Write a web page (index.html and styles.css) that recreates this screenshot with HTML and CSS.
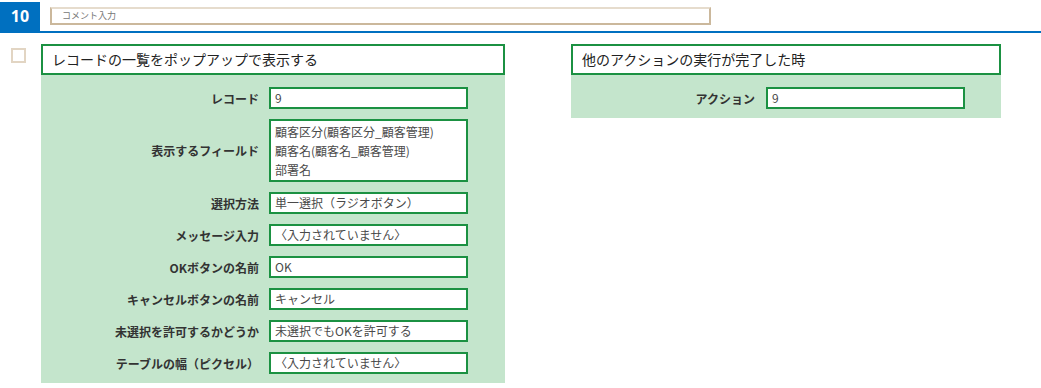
FILE: index.html
```html
<!DOCTYPE html>
<html lang="ja">

<head>
    <meta charset="UTF-8">
    <title>アクション設定</title>
    <link rel="stylesheet" href="styles.css">
</head>

<body>
    <header class="step-header">
        <div class="step-no">10</div>
        <div class="comment-box">コメント入力</div>
    </header>

    <main class="step-body">
        <span class="check"></span>

        <section class="panel panel-main">
            <h2 class="panel-title">レコードの一覧をポップアップで表示する</h2>
            <div class="panel-rows">
                <label>レコード</label>
                <div class="field">9</div>

                <label>表示するフィールド</label>
                <div class="field multi">顧客区分(顧客区分_顧客管理)<br>顧客名(顧客名_顧客管理)<br>部署名</div>

                <label>選択方法</label>
                <div class="field">単一選択（ラジオボタン）</div>

                <label>メッセージ入力</label>
                <div class="field">〈入力されていません〉</div>

                <label>OKボタンの名前</label>
                <div class="field">OK</div>

                <label>キャンセルボタンの名前</label>
                <div class="field">キャンセル</div>

                <label>未選択を許可するかどうか</label>
                <div class="field">未選択でもOKを許可する</div>

                <label>テーブルの幅（ピクセル）</label>
                <div class="field">〈入力されていません〉</div>
            </div>
        </section>

        <section class="panel panel-side">
            <h2 class="panel-title">他のアクションの実行が完了した時</h2>
            <div class="panel-rows">
                <label>アクション</label>
                <div class="field">9</div>
            </div>
        </section>
    </main>
</body>

</html>
```

FILE: styles.css
```css
:root {
    --blue: #0070c0;
    --green: #1b9142;
    --green-bg: #c4e5cc;
    --tan: #cbb89c;
    --text: #333;
}

* {
    margin: 0;
    padding: 0;
    box-sizing: border-box;
}

body {
    font-family: "Noto Sans CJK JP", "Noto Sans", sans-serif;
    color: var(--text);
    background: #fff;
}

.step-header {
    display: flex;
    align-items: center;
    height: 33px;
    padding-top: 2px;
    border-bottom: 2px solid var(--blue);
}

.step-no {
    width: 40px;
    height: 29px;
    background: var(--blue);
    color: #fff;
    font-family: "Open Sans", "Noto Sans", sans-serif;
    font-weight: 700;
    font-size: 16px;
    line-height: 29px;
    text-align: center;
}

.comment-box {
    margin-left: 10px;
    margin-bottom: 2px;
    width: 661px;
    height: 18px;
    border: 2px solid var(--tan);
    border-top-color: #e6dccd;
    padding-left: 10px;
    font-size: 9px;
    line-height: 14px;
    color: #777;
}

.step-body {
    display: flex;
    align-items: flex-start;
    padding-top: 11px;
}

.check {
    width: 15px;
    height: 15px;
    margin: 4px 0 0 11px;
    border: 2px solid #e2d5c3;
}

.panel-title {
    height: 31px;
    border: 2px solid var(--green);
    background: #fff;
    padding-left: 9px;
    font-size: 14px;
    font-weight: 400;
    line-height: 27px;
    color: #222;
}

.panel-main {
    width: 464px;
    margin-left: 15px;
}

.panel-side {
    width: 430px;
    margin-left: 66px;
}

.panel-rows {
    display: grid;
    grid-template-columns: 218px 199px;
    column-gap: 10px;
    row-gap: 10px;
    align-items: center;
    padding: 12px 0 9px;
    background: var(--green-bg);
}

.panel-side .panel-rows {
    grid-template-columns: 184px 199px;
    column-gap: 11px;
}

.panel-rows label {
    text-align: right;
    font-size: 12px;
    font-weight: 700;
    color: #333;
}

.field {
    height: 22px;
    border: 2px solid var(--green);
    background: #fff;
    padding-left: 4px;
    font-size: 12px;
    line-height: 18px;
    color: #4a4a4a;
    white-space: nowrap;
}

.field.multi {
    height: 63px;
    padding-top: 1px;
    line-height: 19px;
}
```
